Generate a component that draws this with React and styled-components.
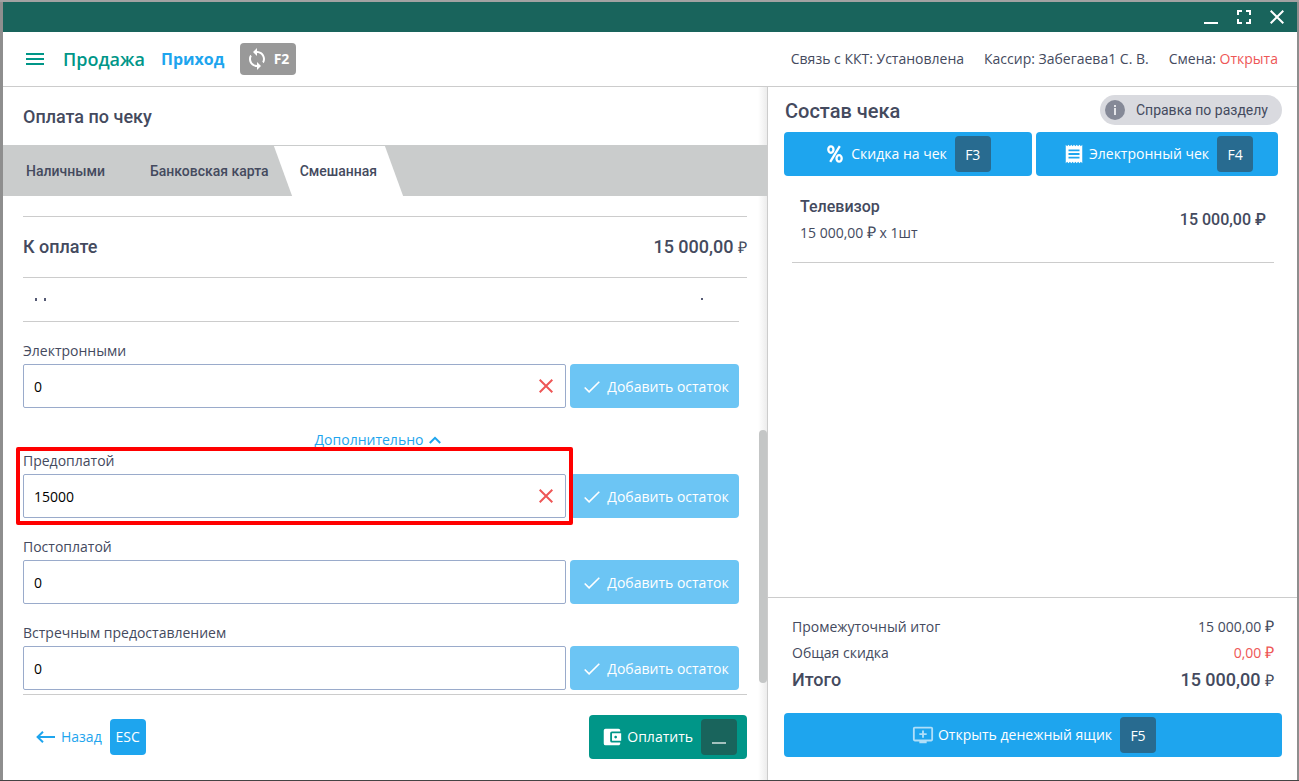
import { useState } from "react";
import styled, { createGlobalStyle, css } from "styled-components";
import {
  MdSync,
  MdReceipt,
  MdAccountBalanceWallet,
  MdOutlineAddToQueue,
} from "react-icons/md";

const GlobalStyle = createGlobalStyle`
  * {
    box-sizing: border-box;
  }

  body {
    margin: 0;
    background: #8e8e8e;
    color: #444a5e;
    font-family: "Open Sans", "Noto Sans", sans-serif;
    font-size: 14px;
    line-height: 20px;
  }

  button, input {
    font: inherit;
  }
`;

const Screen = styled.div`
  height: 100vh;
  padding: 2px 2px 1px 3px;
  background: linear-gradient(#a2a2a2 0 2px, #8e8e8e 2px calc(100% - 1px), #444 calc(100% - 1px));
`;

const AppWindow = styled.div`
  height: 100%;
  display: flex;
  flex-direction: column;
  background: #fff;
`;

const TitleBar = styled.div`
  flex: none;
  height: 30px;
  padding-right: 12px;
  display: flex;
  align-items: center;
  justify-content: flex-end;
  gap: 16px;
  background: #19645c;
`;

const WindowButton = styled.button`
  width: 17px;
  height: 30px;
  padding: 0;
  border: 0;
  background: none;
  color: #fff;
  display: flex;
  align-items: center;
  justify-content: center;
`;

const Header = styled.header`
  flex: none;
  height: 55px;
  padding: 0 19px 0 23px;
  display: flex;
  align-items: center;
  border-bottom: 1px solid #ccc;
`;

const MenuButton = styled.button`
  width: 18px;
  height: 20px;
  margin-right: 19px;
  padding: 0;
  border: 0;
  background: none;
  color: #009688;
  display: flex;
  align-items: center;
`;

const PageName = styled.h1`
  margin: 0 16px 0 0;
  font-size: 18px;
  line-height: 24px;
  font-weight: 600;
  color: #009688;
`;

const Operation = styled.a`
  margin-right: 16px;
  font-size: 16px;
  font-weight: 700;
  color: #1ea5ee;
  text-decoration: none;
`;

const RefreshButton = styled.button`
  width: 56px;
  height: 32px;
  padding: 0 7px 0 5px;
  border: 0;
  border-radius: 4px;
  background: #999;
  color: #fff;
  font-weight: 700;
  display: flex;
  align-items: center;
  justify-content: space-between;
`;

const Status = styled.div`
  margin-left: auto;
  display: flex;
  gap: 20px;
`;

const Red = styled.span`
  color: #ee5656;
`;

const Main = styled.main`
  flex: 1;
  min-height: 0;
  display: grid;
  grid-template-columns: minmax(0, 1fr) 530px;
`;

const Payment = styled.section`
  position: relative;
  min-height: 0;
  display: flex;
  flex-direction: column;
  background: linear-gradient(to left, #ececec, #fff 9px);
`;

const PaymentTitle = styled.h2`
  flex: none;
  height: 58px;
  margin: 0;
  padding: 0 20px;
  font-family: Roboto, sans-serif;
  font-size: 18px;
  line-height: 60px;
  font-weight: 500;
`;

const Tabs = styled.div`
  flex: none;
  height: 51px;
  padding-top: 1px;
  display: flex;
  overflow: hidden;
  background: #cacccc;
`;

const Tab = styled.button`
  position: relative;
  z-index: 0;
  padding: 0 14px 0 15px;
  border: 0;
  background: none;
  color: #444a5e;
  font-family: Roboto, sans-serif;
  font-weight: 500;

  &:first-child {
    padding: 0 30px 0 23px;
  }

  &:last-child {
    padding: 0 17px;
  }

  ${(props) =>
    props.$active &&
    css`
      &::before {
        content: "";
        position: absolute;
        inset: 0;
        z-index: -1;
        background: #fff;
        transform: skewX(20deg);
      }
    `}
`;

const Due = styled.div`
  flex: none;
  margin: 20px 20px 0;
  height: 62px;
  border: 1px solid #ccc;
  border-width: 1px 0;
  display: flex;
  align-items: center;
  justify-content: space-between;
  font-family: Roboto, sans-serif;
  font-size: 18px;
  font-weight: 500;
`;

const Ruble = styled.span`
  font-family: "Open Sans", sans-serif;
  font-size: 16px;
  line-height: 1;
  font-weight: 400;
`;

const Fields = styled.div`
  flex: 1;
  min-height: 0;
  padding: 0 28px 0 20px;
  overflow: hidden;
`;

const CutRow = styled.div`
  height: 44px;
  padding: 20px 36px 0 12px;
  display: flex;
  gap: 7px;
  border-bottom: 1px solid #ccc;
`;

const Mark = styled.i`
  width: 2px;
  height: ${(props) => (props.$last ? 2 : 3)}px;
  margin-left: ${(props) => (props.$last ? "auto" : 0)};
  background: #555a75;
`;

const Field = styled.div`
  position: relative;
  margin-top: 19px;

  ${(props) =>
    props.$marked &&
    css`
      margin-top: 0;

      &::after {
        content: "";
        position: absolute;
        inset: -4px 166px -7px -7px;
        border: 4px solid #f00;
        border-radius: 2px;
        pointer-events: none;
      }
    `}
`;

const Label = styled.label`
  display: block;
  margin-bottom: 3px;
`;

const FieldRow = styled.div`
  display: flex;
  gap: 4px;
`;

const InputBox = styled.div`
  flex: 1;
  height: 44px;
  padding: 0 12px 0 10px;
  display: flex;
  align-items: center;
  border: 1px solid #9aabcb;
  border-radius: 2px;
  background: #fff;
`;

const Input = styled.input`
  flex: 1;
  min-width: 0;
  padding: 2px 0 0;
  border: 0;
  outline: 0;
  background: none;
  color: #000;
`;

const ClearButton = styled.button`
  padding: 0;
  border: 0;
  background: none;
  color: #ee5656;
  display: flex;
`;

const Button = styled.button`
  height: 44px;
  padding: 0 10px 0 12px;
  border: 0;
  border-radius: 4px;
  background: ${(props) => props.$color || "#1ea5ee"};
  color: #fff;
  display: flex;
  align-items: center;
  justify-content: center;
  gap: 4px;
  white-space: nowrap;
`;

const RestButton = styled(Button)`
  width: 169px;
  padding: 2px 10px 0 14px;
  gap: 7px;
  background: #6cc5f4;
`;

const Key = styled.kbd`
  width: 36px;
  height: 36px;
  margin-left: 4px;
  padding-top: 1px;
  border-radius: 4px;
  background: ${(props) => props.$color || "#286b90"};
  color: #fff;
  font: inherit;
  display: flex;
  align-items: center;
  justify-content: center;

  svg {
    opacity: 0.6;
  }
`;

const More = styled.button`
  width: 100%;
  height: 43px;
  padding: 22px 6px 1px 0;
  border: 0;
  background: none;
  color: #1ea5ee;
  display: flex;
  align-items: center;
  justify-content: center;
  gap: 6px;
`;

const ScrollThumb = styled.div`
  position: absolute;
  right: 0;
  bottom: 97px;
  width: 8px;
  height: 253px;
  border-radius: 4px;
  background: #c4c6c6;
`;

const PaymentFooter = styled.footer`
  flex: none;
  height: 86px;
  margin: 0 20px;
  padding-bottom: 2px;
  border-top: 1px solid #ccc;
  display: flex;
  align-items: center;
  justify-content: space-between;
`;

const Back = styled.button`
  padding: 0 0 0 13px;
  border: 0;
  background: none;
  color: #1ea5ee;
  display: flex;
  align-items: center;
  gap: 6px;

  ${Key} {
    margin-left: 2px;
  }
`;

const Receipt = styled.section`
  min-height: 0;
  display: flex;
  flex-direction: column;
  border-left: 1px solid #ccc;
`;

const ReceiptHead = styled.div`
  height: 45px;
  padding: 8px 15px 0 17px;
  display: flex;
  align-items: flex-start;
  justify-content: space-between;
`;

const ReceiptTitle = styled.h2`
  margin: 0;
  font-family: Roboto, sans-serif;
  font-size: 20px;
  line-height: 32px;
  font-weight: 500;
`;

const Help = styled.button`
  height: 30px;
  padding: 0 14px 0 5px;
  border: 0;
  border-radius: 15px;
  background: #d9dadf;
  color: #444a5e;
  font-family: Roboto, sans-serif;
  display: flex;
  align-items: center;
  gap: 11px;
`;

const Actions = styled.div`
  padding: 0 19px 0 16px;
  display: grid;
  grid-template-columns: 248fr 242fr;
  gap: 4px;
`;

const Item = styled.div`
  margin: 0 23px 0 24px;
  padding: 20px 8px 19px;
  border-bottom: 1px solid #ccc;
  display: flex;
  align-items: center;
  justify-content: space-between;
`;

const Strong = styled.div`
  font-family: Roboto, sans-serif;
  font-size: 16px;
  line-height: 22px;
  font-weight: 500;
`;

const Quantity = styled.div`
  margin-top: 5px;
`;

const Totals = styled.dl`
  margin: auto 0 0;
  padding: 16px 23px 19px 24px;
  border-top: 1px solid #ccc;
`;

const TotalRow = styled.div`
  display: flex;
  justify-content: space-between;
  line-height: 26px;

  dd {
    margin: 0;
  }

  ${(props) =>
    props.$grand &&
    css`
      line-height: 28px;
      font-family: Roboto, sans-serif;
      font-size: 18px;
      font-weight: 500;
    `}
`;

const Drawer = styled.div`
  padding: 0 15px 23px 16px;
  display: grid;
`;

const PercentIcon = styled.svg`
  margin-right: 4px;
`;

const QueueIcon = styled(MdOutlineAddToQueue)`
  opacity: 0.65;
`;

const Cross = () => (
  <svg width="14" height="14" viewBox="0 0 14 14" stroke="currentColor" strokeWidth="2">
    <path d="M.7.7l12.6 12.6M13.3.7L.7 13.3" />
  </svg>
);

const Check = () => (
  <svg width="16" height="12" viewBox="0 0 16 12" fill="none" stroke="currentColor" strokeWidth="1.6">
    <path d="M.7 6.5l4.4 4.4L15.3.8" />
  </svg>
);

const Percent = () => (
  <PercentIcon width="16" height="18" viewBox="0 0 16 18" fill="none" stroke="currentColor" strokeWidth="2.3">
    <ellipse cx="3.900" cy="4.600" rx="2.600" ry="3.200" />
    <ellipse cx="12.100" cy="13.400" rx="2.600" ry="3.200" />
    <path d="M12.800 1.200L3.200 16.800" />
  </PercentIcon>
);

const Underscore = () => (
  <svg width="14" height="14" viewBox="0 0 14 14">
    <path d="M0 13h14" stroke="currentColor" strokeWidth="2" />
  </svg>
);

const FIELDS = [
  { id: "electronic", label: "Электронными", value: "0", clear: true },
  { id: "prepaid", label: "Предоплатой", value: "15000", clear: true, marked: true },
  { id: "postpaid", label: "Постоплатой", value: "0" },
  { id: "counter", label: "Встречным предоставлением", value: "0" },
];

const TABS = ["Наличными", "Банковская карта", "Смешанная"];

function PayField({ field, value, onChange }) {
  return (
    <Field $marked={field.marked}>
      <Label htmlFor={field.id}>{field.label}</Label>
      <FieldRow>
        <InputBox>
          <Input id={field.id} value={value} onChange={(e) => onChange(e.target.value)} />
          {field.clear && (
            <ClearButton aria-label="Очистить" onClick={() => onChange("0")}>
              <Cross />
            </ClearButton>
          )}
        </InputBox>
        <RestButton>
          <Check />
          Добавить остаток
        </RestButton>
      </FieldRow>
    </Field>
  );
}

function App() {
  const [tab, setTab] = useState(2);
  const [values, setValues] = useState(FIELDS.map((f) => f.value));

  const renderField = (i) => (
    <PayField
      key={FIELDS[i].id}
      field={FIELDS[i]}
      value={values[i]}
      onChange={(v) => setValues(values.map((old, n) => (n === i ? v : old)))}
    />
  );

  return (
    <Screen>
      <GlobalStyle />
      <AppWindow>
        <TitleBar>
          <WindowButton aria-label="Свернуть">
            <Underscore />
          </WindowButton>
          <WindowButton aria-label="Развернуть">
            <svg width="14" height="14" viewBox="0 0 14 14" fill="none" stroke="currentColor" strokeWidth="2">
              <path d="M1 5V1h4M9 1h4v4M13 9v4H9M5 13H1V9" />
            </svg>
          </WindowButton>
          <WindowButton aria-label="Закрыть">
            <Cross />
          </WindowButton>
        </TitleBar>

        <Header>
          <MenuButton aria-label="Меню">
            <svg width="18" height="12" viewBox="0 0 18 12" fill="currentColor">
              <path d="M0 0h18v2H0zM0 5h18v2H0zM0 10h18v2H0z" />
            </svg>
          </MenuButton>
          <PageName>Продажа</PageName>
          <Operation href="#income">Приход</Operation>
          <RefreshButton>
            <MdSync size={24} />
            F2
          </RefreshButton>
          <Status>
            <span>Связь с ККТ: Установлена</span>
            <span>Кассир: Забегаева1 С. В.</span>
            <span>
              Смена: <Red>Открыта</Red>
            </span>
          </Status>
        </Header>

        <Main>
          <Payment>
            <PaymentTitle>Оплата по чеку</PaymentTitle>
            <Tabs role="tablist">
              {TABS.map((name, i) => (
                <Tab key={name} role="tab" aria-selected={tab === i} $active={tab === i} onClick={() => setTab(i)}>
                  {name}
                </Tab>
              ))}
            </Tabs>
            <Due>
              <span>К оплате</span>
              <span>
                15 000,00 <Ruble>₽</Ruble>
              </span>
            </Due>
            <Fields>
              <CutRow>
                <Mark />
                <Mark />
                <Mark $last />
              </CutRow>
              {renderField(0)}
              <More>
                Дополнительно
                <svg width="12" height="8" viewBox="0 0 12 8" fill="none" stroke="currentColor" strokeWidth="2">
                  <path d="M.8 7L6 1.8 11.2 7" />
                </svg>
              </More>
              {renderField(1)}
              {renderField(2)}
              {renderField(3)}
            </Fields>
            <ScrollThumb />
            <PaymentFooter>
              <Back>
                <svg width="19" height="12" viewBox="0 0 19 12" fill="none" stroke="currentColor" strokeWidth="2">
                  <path d="M19 6H2M7 .8L1.6 6 7 11.2" />
                </svg>
                Назад
                <Key $color="#1ea5ee">ESC</Key>
              </Back>
              <Button $color="#009688">
                <MdAccountBalanceWallet size={22} />
                Оплатить
                <Key $color="#19645c">
                  <Underscore />
                </Key>
              </Button>
            </PaymentFooter>
          </Payment>

          <Receipt>
            <ReceiptHead>
              <ReceiptTitle>Состав чека</ReceiptTitle>
              <Help>
                <svg width="20" height="20" viewBox="0 0 20 20">
                  <circle cx="10" cy="10" r="10" fill="#858997" />
                  <path d="M9 5h2v2H9zM9 8h2v7H9z" fill="#e4e5e9" />
                </svg>
                Справка по разделу
              </Help>
            </ReceiptHead>
            <Actions>
              <Button>
                <Percent />
                Скидка на чек
                <Key>F3</Key>
              </Button>
              <Button>
                <MdReceipt size={22} />
                Электронный чек
                <Key>F4</Key>
              </Button>
            </Actions>
            <Item>
              <div>
                <Strong>Телевизор</Strong>
                <Quantity>
                  15 000,00 <Ruble>₽</Ruble> x 1шт
                </Quantity>
              </div>
              <Strong>15 000,00 ₽</Strong>
            </Item>
            <Totals>
              <TotalRow>
                <dt>Промежуточный итог</dt>
                <dd>
                  15 000,00 <Ruble>₽</Ruble>
                </dd>
              </TotalRow>
              <TotalRow>
                <dt>Общая скидка</dt>
                <dd>
                  <Red>
                    0,00 <Ruble>₽</Ruble>
                  </Red>
                </dd>
              </TotalRow>
              <TotalRow $grand>
                <dt>Итого</dt>
                <dd>
                  15 000,00 <Ruble>₽</Ruble>
                </dd>
              </TotalRow>
            </Totals>
            <Drawer>
              <Button>
                <QueueIcon size={22} />
                Открыть денежный ящик
                <Key>F5</Key>
              </Button>
            </Drawer>
          </Receipt>
        </Main>
      </AppWindow>
    </Screen>
  );
}

export default App;
